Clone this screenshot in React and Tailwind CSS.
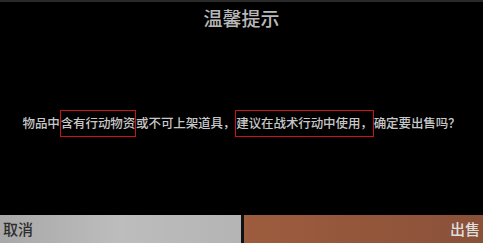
import React from 'react';

const font = { fontFamily: '"Noto Sans CJK SC", "Noto Sans", sans-serif' };

const Marked = ({ children }) => (
  <span className="inline-block border-[1.5px] border-solid border-[#cc1418] py-[6px] leading-none">{children}</span>
);

export default function App() {
  return (
    <div className="w-[483px] h-[243px] bg-black flex flex-col overflow-hidden" style={font}>
      <div className="h-[2px] bg-[#2a2a2a]" />
      <div className="h-[30px] flex items-center justify-center text-[19px] leading-none text-[#b8b8b8] font-medium">
        温馨提示
      </div>
      <div className="flex-1 flex items-center justify-center">
        <p className="text-[12.5px] leading-none text-[#c8c8c8] font-medium whitespace-nowrap tracking-[-0.1px] flex items-center">
          物品中<Marked>含有行动物资</Marked>或不可上架道具，<Marked>建议在战术行动中使用，</Marked>确定要出售吗？
        </p>
      </div>
      <div className="h-[28px] flex">
        <button className="w-[244px] h-full flex items-center pl-[3px] bg-gradient-to-r from-[#a8a8a8] via-[#bdbdbd] to-[#b4b4b4] border-r-[3px] border-[#111] text-[15px] font-medium text-[#2e2e2e]">
          取消
        </button>
        <button className="flex-1 h-full flex items-center justify-end pr-[3px] bg-gradient-to-r from-[#9d5c3e] to-[#8a5139] text-[15px] font-medium text-[#dedede]">
          出售
        </button>
      </div>
    </div>
  );
}
